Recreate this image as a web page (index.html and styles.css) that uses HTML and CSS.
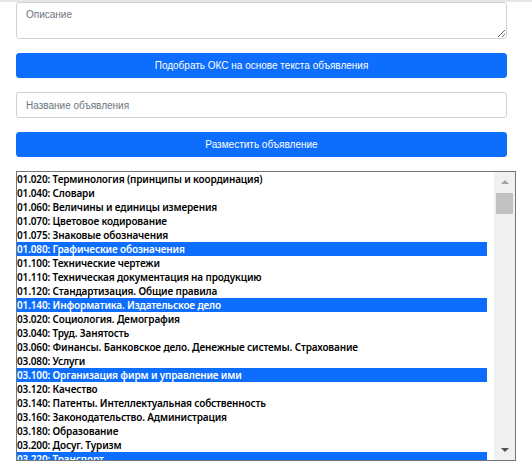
FILE: index.html
```html
<!DOCTYPE html>
<html lang="ru">
<head>
<meta charset="utf-8">
<link rel="stylesheet" href="styles.css">
</head>
<body>
<div class="page">
  <div class="form">
    <textarea class="field area" placeholder="Описание"></textarea>
    <button class="btn">Подобрать ОКС на основе текста объявления</button>
    <input class="field input" type="text" placeholder="Название объявления">
    <button class="btn">Разместить объявление</button>
  </div>
  <div class="list">
    <div class="options">
      <div class="opt">01.020: Терминология (принципы и координация)</div>
      <div class="opt">01.040: Словари</div>
      <div class="opt">01.060: Величины и единицы измерения</div>
      <div class="opt">01.070: Цветовое кодирование</div>
      <div class="opt">01.075: Знаковые обозначения</div>
      <div class="opt sel">01.080: Графические обозначения</div>
      <div class="opt">01.100: Технические чертежи</div>
      <div class="opt">01.110: Техническая документация на продукцию</div>
      <div class="opt">01.120: Стандартизация. Общие правила</div>
      <div class="opt sel">01.140: Информатика. Издательское дело</div>
      <div class="opt">03.020: Социология. Демография</div>
      <div class="opt">03.040: Труд. Занятость</div>
      <div class="opt">03.060: Финансы. Банковское дело. Денежные системы. Страхование</div>
      <div class="opt">03.080: Услуги</div>
      <div class="opt sel">03.100: Организация фирм и управление ими</div>
      <div class="opt">03.120: Качество</div>
      <div class="opt">03.140: Патенты. Интеллектуальная собственность</div>
      <div class="opt">03.160: Законодательство. Администрация</div>
      <div class="opt">03.180: Образование</div>
      <div class="opt">03.200: Досуг. Туризм</div>
      <div class="opt sel">03.220: Транспорт</div>
    </div>
    <div class="gap"></div>
    <div class="scrollbar">
      <div class="arrow up"></div>
      <div class="thumb"></div>
      <div class="track"></div>
      <div class="arrow down"></div>
    </div>
  </div>
</div>
</body>
</html>
```
FILE: styles.css
```css
* { box-sizing: border-box; }
html, body { margin: 0; padding: 0; background: #fff; }
body { font-family: "Liberation Sans", Arial, sans-serif; }
.page {
  border-top: 2px solid #e6e6e6;
  padding: 0 0 0 16px;
}
.form {
  width: 491px;
  display: flex;
  flex-direction: column;
  gap: 14px;
}
.field {
  display: block;
  width: 100%;
  border: 1px solid #cfd3d7;
  border-radius: 3px;
  font-family: "Liberation Sans", Arial, sans-serif;
  font-size: 10px;
  color: #212529;
  padding: 0 9px;
  background: #fff;
  outline: none;
}
.field::placeholder { color: #6c757d; }
.area {
  height: 37px;
  padding-top: 6px;
  resize: vertical;
  margin-top: 0;
}
.input { height: 26px; }
.btn {
  display: block;
  width: 100%;
  height: 25px;
  border: 1px solid #0d6efd;
  background: #0d6efd;
  color: #fff;
  border-radius: 3px;
  font-family: "Liberation Sans", Arial, sans-serif;
  font-size: 10px;
  padding: 0;
}
.list {
  margin-top: 14px;
  width: 500px;
  height: 290px;
  border: 1px solid #767676;
  display: flex;
  overflow: hidden;
}
.options {
  width: 470px;
  flex: none;
}
.opt {
  height: 14px;
  line-height: 14px;
  font-family: "Noto Sans", "Open Sans", sans-serif;
  font-size: 10px;
  font-weight: 600;
  letter-spacing: -0.15px;
  color: #000;
  white-space: nowrap;
}
.opt.sel { background: #0d6efd; color: #fff; }
.gap { width: 7px; flex: none; }
.scrollbar {
  width: 21px;
  flex: none;
  background: #f0f0f0;
  display: flex;
  flex-direction: column;
  align-items: center;
}
.arrow {
  width: 0;
  height: 0;
  border-left: 4px solid transparent;
  border-right: 4px solid transparent;
}
.arrow.up {
  margin-top: 8px;
  border-bottom: 4px solid #a3a3a3;
}
.thumb {
  margin-top: 9px;
  width: 17px;
  height: 21px;
  background: #c1c1c1;
}
.track { flex: 1; }
.arrow.down {
  margin-bottom: 8px;
  border-top: 4px solid #505050;
}
```
